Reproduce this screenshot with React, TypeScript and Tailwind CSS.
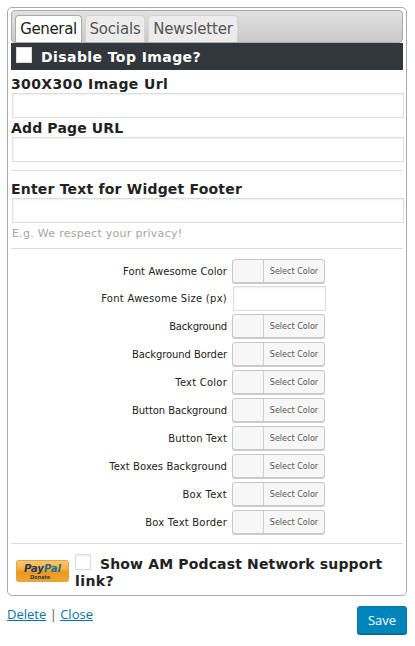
import React from 'react';

const colorRows = [
  { label: 'Background', tracking: 'tracking-[-0.18px]' },
  { label: 'Background Border', tracking: 'tracking-[-0.08px]' },
  { label: 'Text Color', tracking: 'tracking-[0.22px]' },
  { label: 'Button Background', tracking: 'tracking-[-0.08px]' },
  { label: 'Button Text', tracking: 'tracking-[0.16px]' },
  { label: 'Text Boxes Background', tracking: 'tracking-[0.09px]' },
  { label: 'Box Text', tracking: 'tracking-[0.32px]' },
  { label: 'Box Text Border', tracking: 'tracking-[0.2px]' },
];

const FieldInput = () => (
  <input className="ml-px block h-[25px] w-[392px] border border-[#ddd] bg-white px-1 text-sm shadow-[inset_0_1px_2px_rgba(0,0,0,0.07)] outline-none" />
);

function ColorRow({ label, tracking }: { label: string; tracking: string }) {
  return (
    <div className="flex h-7 items-start">
      <span className={`w-[216px] text-right text-[10px] leading-[25px] whitespace-nowrap ${tracking}`}>{label}</span>
      <button className="ml-[5px] flex h-6 w-[93px] overflow-hidden rounded-[3px] border border-[#c8c8c8] bg-[#f7f7f7] shadow-[0_1px_0_#ccc]">
        <span className="h-full w-[31px] border-r border-[#ccc]" />
        <span className="flex-1 text-center text-[8px] leading-[24px] tracking-[0.02px] text-[#555]">Select Color</span>
      </button>
    </div>
  );
}

export default function App() {
  return (
    <main className="h-[646px] w-[415px] overflow-hidden bg-white pt-[7px] pl-[7px] font-['DejaVu_Sans',sans-serif] text-[#222]">
      <section className="h-[589px] w-[400px] rounded-[5px] border border-[#aaa] pt-[2px] pl-[3px]">
        <nav className="flex h-[33px] w-[392px] items-end gap-[3px] rounded-[4px] border border-[#aaa] bg-linear-to-b from-[#e1e1e1] to-[#c9c9c9] pl-[3px] text-[15px] leading-[27px] text-[#555]">
          <button className="h-[27px] w-[67px] rounded-t-[4px] border border-b-0 border-[#aaa] bg-white tracking-[-0.35px] text-[#212121]">General</button>
          <button className="h-[27px] w-[60px] rounded-t-[4px] border border-b-0 border-[#d3d3d3] bg-[#ececec] tracking-[-0.15px]">Socials</button>
          <button className="h-[27px] w-[90px] rounded-t-[4px] border border-b-0 border-[#d3d3d3] bg-[#ececec] tracking-[-0.15px]">Newsletter</button>
        </nav>
        <div className="flex h-[27px] w-[392px] bg-[#32373c] pt-1 pl-[5px] text-white">
          <span className="size-4 border border-[#ddd] bg-white" />
          <b className="ml-[9px] text-[14px] leading-5 tracking-[0.42px]">Disable Top Image?</b>
        </div>
        <label className="block h-[23px] pt-1 text-[14px] leading-5 font-bold tracking-[0.37px]">300X300 Image Url</label>
        <FieldInput />
        <label className="block h-[19px] text-[14px] leading-5 font-bold tracking-[0.15px]">Add Page URL</label>
        <FieldInput />
        <hr className="mt-2 w-[392px] border-[#ddd]" />
        <label className="block h-[27px] pt-2 text-[14px] leading-5 font-bold tracking-[0.2px]">Enter Text for Widget Footer</label>
        <FieldInput />
        <p className="h-[25px] pl-px text-[11px] leading-[21px] tracking-[0.28px] text-[#a5a5a5]">E.g. We respect your privacy!</p>
        <hr className="w-[392px] border-[#ddd]" />
        <div className="h-[294px] pt-[10px]">
          <div className="h-[27px]"><ColorRow label="Font Awesome Color" tracking="tracking-[0.1px]" /></div>
          <div className="flex h-7">
            <span className="w-[216px] text-right text-[10px] leading-[25px] tracking-[0.27px]">Font Awesome Size (px)</span>
            <input className="ml-[6px] h-[25px] w-[93px] border border-[#ddd] px-1 shadow-[inset_0_1px_2px_rgba(0,0,0,0.07)]" />
          </div>
          {colorRows.map((row) => <ColorRow key={row.label} label={row.label} tracking={row.tracking} />)}
        </div>
        <hr className="w-[392px] border-[#ddd]" />
        <div className="flex">
          <svg className="mt-4 ml-[5px]" width="53" height="22" viewBox="0 0 53 22">
            <defs>
              <linearGradient id="gold" x1="0" y1="0" x2="0" y2="1">
                <stop stopColor="#fbc96c" />
                <stop offset=".4" stopColor="#f6b347" />
                <stop offset=".55" stopColor="#ea991c" />
                <stop offset="1" stopColor="#f1a52f" />
              </linearGradient>
            </defs>
            <rect x=".5" y=".5" width="52" height="21" rx="2" fill="url(#gold)" stroke="#e5a143" />
            <g fontFamily="DejaVu Sans" fontStyle="italic" fontWeight="bold">
              <text x="8" y="11.5" fontSize="10" textLength="20" lengthAdjust="spacingAndGlyphs" fill="#23375f">Pay</text>
              <text x="28" y="11.5" fontSize="10" textLength="17" lengthAdjust="spacingAndGlyphs" fill="#226992">Pal</text>
              <text x="14" y="18.5" fontSize="5.5" textLength="20" lengthAdjust="spacingAndGlyphs" fill="#333c4d">Donate</text>
            </g>
          </svg>
          <p className="ml-[6px] w-[325px] pt-[10px] text-[14px] leading-[17px] font-bold tracking-[0.15px]">
            <span className="mr-[9px] inline-block size-4 border border-[#ddd] bg-white align-[-1px] shadow-[inset_0_1px_2px_rgba(0,0,0,0.08)]" />
            Show AM Podcast Network support <span className="tracking-[0.4px]">link?</span>
          </p>
        </div>
      </section>
      <footer className="flex w-[400px] justify-between font-['Open_Sans',sans-serif] text-[13px]">
        <div className="pt-2 leading-5 text-[#555]">
          <a className="text-[#0074a2] underline">Delete</a> | <a className="text-[#0074a2] underline">Close</a>
        </div>
        <button className="mt-[10px] h-7 w-[50px] rounded-[3px] border border-[#0073aa] bg-[#0085ba] leading-[26px] text-white shadow-[0_1px_0_#006799]">Save</button>
      </footer>
    </main>
  );
}
